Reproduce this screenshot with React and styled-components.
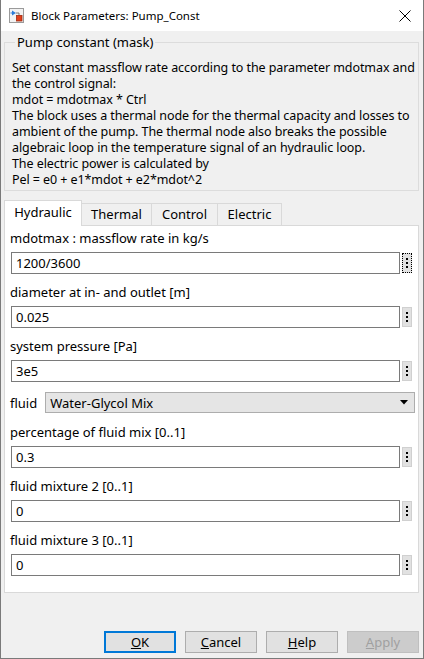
import React from "react";
import styled, { createGlobalStyle, css } from "styled-components";

const GlobalStyle = createGlobalStyle`
  html, body {
    margin: 0;
    padding: 0;
    background: #ffffff;
  }
  body {
    font-family: "Noto Sans", "Segoe UI", Arial, sans-serif;
    font-size: 12.5px;
    color: #000000;
  }
`;

const Window = styled.div`
  width: 424px;
  height: 659px;
  box-sizing: border-box;
  border: 1px solid #7a7a7a;
  border-top: none;
  background: #f0f0f0;
  display: flex;
  flex-direction: column;
`;

const TitleBar = styled.div`
  height: 31px;
  flex: none;
  background: #ffffff;
  display: flex;
  align-items: center;
  padding: 0 12px 0 8px;
  gap: 7px;
`;

const TitleText = styled.div`
  flex: 1;
  font-size: 11.5px;
  white-space: nowrap;
`;

const Body = styled.div`
  flex: 1;
  display: flex;
  flex-direction: column;
  padding: 2px 4px 5px 3px;
`;

const GroupBox = styled.fieldset`
  margin: 0;
  padding: 9px 7px 2px 7px;
  border: 1px solid #dcdcdc;
  min-width: 0;
`;

const Legend = styled.legend`
  padding: 0 2px;
  margin-left: 3px;
  font-size: 13px;
`;

const Description = styled.div`
  line-height: 16px;
  font-size: 12.5px;
  letter-spacing: -0.08px;
  white-space: nowrap;
`;

const TabBar = styled.div`
  display: flex;
  align-items: flex-end;
  margin-top: 9px;
  height: 25px;
`;

const Tab = styled.div`
  box-sizing: border-box;
  width: ${(p) => p.$w}px;
  text-align: center;
  border: 1px solid #d9d9d9;
  border-bottom: none;
  font-size: 13px;
  ${(p) =>
    p.$active
      ? css`
          height: 26px;
          background: #ffffff;
          line-height: 23px;
          margin-bottom: -1px;
          position: relative;
          z-index: 1;
        `
      : css`
          height: 22px;
          background: #f0f0f0;
          line-height: 21px;
          border-left: none;
        `}
`;

const Panel = styled.div`
  height: 368px;
  box-sizing: border-box;
  background: #ffffff;
  border: 1px solid #d9d9d9;
  padding: 3px 6px 0 5px;
  display: flex;
  flex-direction: column;
`;

const Field = styled.div`
  display: flex;
  flex-direction: column;
  margin-bottom: 9px;
`;

const Label = styled.div`
  font-size: 13px;
  line-height: 18px;
  margin-bottom: 5px;
  white-space: nowrap;
`;

const InlineLabel = styled.span`
  font-size: 13px;
  line-height: 18px;
`;

const InputRow = styled.div`
  display: flex;
  align-items: center;
  gap: 2px;
  padding-left: 1px;
`;

const TextBox = styled.div`
  box-sizing: border-box;
  width: 389px;
  height: 22px;
  border: 1px solid #7a7a7a;
  background: #ffffff;
  padding-left: 4px;
  line-height: 20px;
  font-size: 13px;
`;

const DotsButton = styled.div`
  box-sizing: border-box;
  width: 10px;
  height: 20px;
  background: #e1e1e1;
  border: 1px ${(p) => (p.$focus ? "dotted #000000" : "solid #d0d0d0")};
  display: flex;
  flex-direction: column;
  align-items: center;
  justify-content: center;
  gap: 2px;
`;

const Dot = styled.span`
  width: 2px;
  height: 2px;
  background: #000000;
`;

const SelectRow = styled.div`
  display: flex;
  align-items: center;
  gap: 8px;
  margin: 1px 0 10px 0;
`;

const SelectBox = styled.div`
  box-sizing: border-box;
  flex: 1;
  height: 21px;
  margin-right: -3px;
  background: #e5e5e5;
  border: 1px solid #adadad;
  display: flex;
  align-items: center;
  justify-content: space-between;
  padding: 0 6px 0 4px;
  font-size: 13px;
`;

const ButtonBar = styled.div`
  margin-top: auto;
  display: flex;
  justify-content: flex-end;
  gap: 9px;
`;

const Button = styled.div`
  box-sizing: border-box;
  width: 72px;
  height: 22px;
  border: ${(p) => (p.$default ? "2px" : "1px")} solid
    ${(p) => (p.$disabled ? "#bfbfbf" : p.$default ? "#0078d7" : "#adadad")};
  color: ${(p) => (p.$disabled ? "#a0a0a0" : "#000000")};
  background: ${(p) => (p.$disabled ? "#cccccc" : "#e1e1e1")};
  display: flex;
  align-items: center;
  justify-content: center;
  font-size: 13px;
`;

const fields = [
  { label: "mdotmax : massflow rate in kg/s", value: "1200/3600", focus: true },
  { label: "diameter at in- and outlet [m]", value: "0.025" },
  { label: "system pressure [Pa]", value: "3e5" },
];

const fields2 = [
  { label: "percentage of fluid mix [0..1]", value: "0.3" },
  { label: "fluid mixture 2 [0..1]", value: "0" },
  { label: "fluid mixture 3 [0..1]", value: "0" },
];

const BlockIcon = () => (
  <svg width="15" height="15" viewBox="0 0 15 15">
    <rect x="0.5" y="0.5" width="14" height="14" fill="#f2f2f2" stroke="#9a9a9a" />
    <path d="M3 2.5 L7 5 L3 7.5 Z" fill="#2b7bd6" />
    <path d="M1.5 5 H3" stroke="#2b7bd6" strokeWidth="1" />
    <path d="M7 5 H10 V8" stroke="#555" fill="none" strokeWidth="0.8" />
    <rect x="7.5" y="7.5" width="5.5" height="5.5" fill="#e0401a" stroke="#a02a10" strokeWidth="0.8" />
  </svg>
);

const CloseIcon = () => (
  <svg width="12" height="12" viewBox="0 0 12 12">
    <path d="M0.5 0.5 L11.5 11.5 M11.5 0.5 L0.5 11.5" stroke="#000" strokeWidth="1" />
  </svg>
);

const DropArrow = () => (
  <svg width="8" height="5" viewBox="0 0 8 5">
    <path d="M0 0 H8 L4 4.5 Z" fill="#000" />
  </svg>
);

const ParamField = ({ label, value, focus }) => (
  <Field>
    <Label>{label}</Label>
    <InputRow>
      <TextBox>{value}</TextBox>
      <DotsButton $focus={focus}>
        <Dot />
        <Dot />
        <Dot />
      </DotsButton>
    </InputRow>
  </Field>
);

export default function App() {
  return (
    <>
      <GlobalStyle />
      <Window>
        <TitleBar>
          <BlockIcon />
          <TitleText>Block Parameters: Pump_Const</TitleText>
          <CloseIcon />
        </TitleBar>
        <Body>
          <GroupBox>
            <Legend>Pump constant (mask)</Legend>
            <Description>
              Set constant massflow rate according to the parameter mdotmax and
              <br />
              the control signal:
              <br />
              mdot = mdotmax * Ctrl
              <br />
              The block uses a thermal node for the thermal capacity and losses to
              <br />
              ambient of the pump. The thermal node also breaks the possible
              <br />
              algebraic loop in the temperature signal of an hydraulic loop.
              <br />
              The electric power is calculated by
              <br />
              Pel = e0 + e1*mdot + e2*mdot^2
            </Description>
          </GroupBox>
          <TabBar>
            <Tab $active $w={78}>Hydraulic</Tab>
            <Tab $w={70}>Thermal</Tab>
            <Tab $w={66}>Control</Tab>
            <Tab $w={64}>Electric</Tab>
          </TabBar>
          <Panel>
            {fields.map((f) => (
              <ParamField key={f.label} {...f} />
            ))}
            <SelectRow>
              <InlineLabel>fluid</InlineLabel>
              <SelectBox>
                <span>Water-Glycol Mix</span>
                <DropArrow />
              </SelectBox>
            </SelectRow>
            {fields2.map((f) => (
              <ParamField key={f.label} {...f} />
            ))}
          </Panel>
          <ButtonBar>
            <Button $default><u>O</u>K</Button>
            <Button><u>C</u>ancel</Button>
            <Button><u>H</u>elp</Button>
            <Button $disabled><u>A</u>pply</Button>
          </ButtonBar>
        </Body>
      </Window>
    </>
  );
}
